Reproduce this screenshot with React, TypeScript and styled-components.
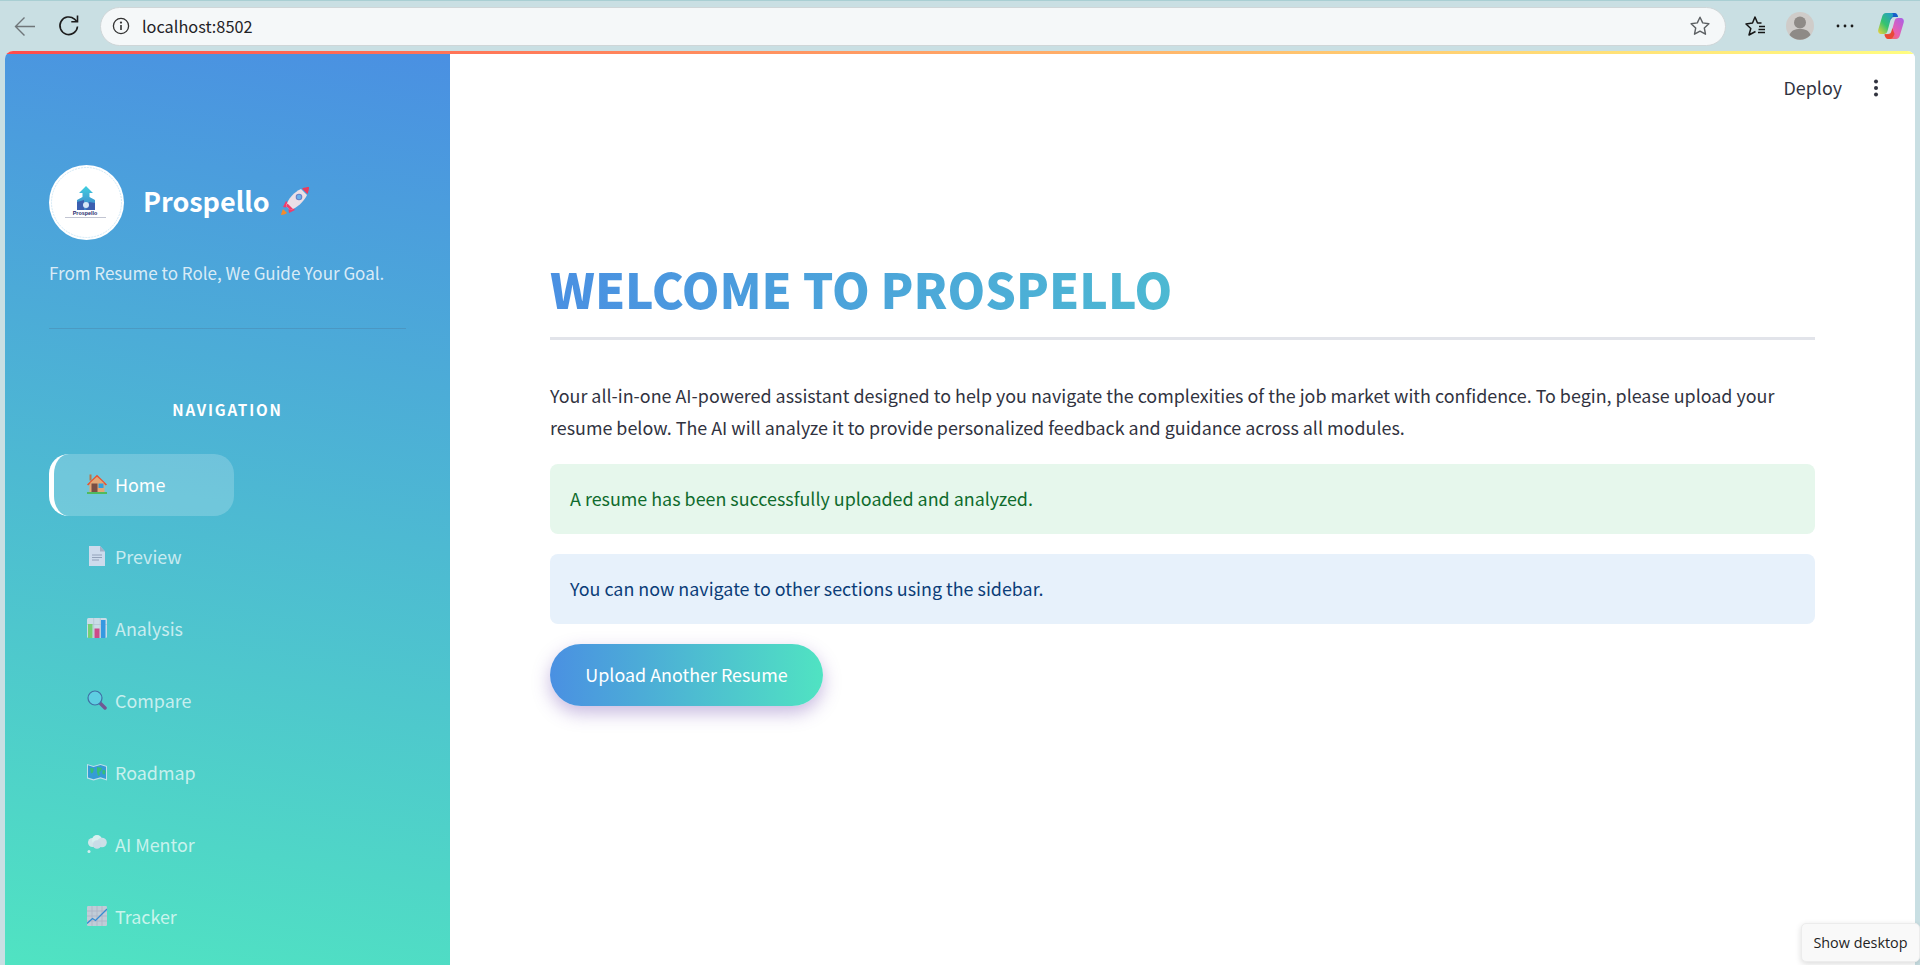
import React from 'react';
import styled, { createGlobalStyle } from 'styled-components';

const GlobalStyle = createGlobalStyle`
  html, body {
    margin: 0;
    padding: 0;
    height: 100%;
    overflow: hidden;
  }
  body {
    font-family: "Noto Sans CJK SC", "Noto Sans", sans-serif;
    background: #c9dfe3;
  }
  * {
    box-sizing: border-box;
  }
`;

const Page = styled.div`
  position: relative;
  width: 1920px;
  height: 965px;
  display: flex;
  flex-direction: column;
  overflow: hidden;
  background: #c9dfe3;
`;

const BrowserBar = styled.header`
  flex: 0 0 51px;
  height: 51px;
  display: flex;
  align-items: center;
  padding: 0 5px 0 6px;
  border-top: 1px solid #a9cfd3;
`;

const ToolButton = styled.button<{ $width: number }>`
  flex: 0 0 ${(p) => p.$width}px;
  width: ${(p) => p.$width}px;
  height: 38px;
  padding: 0;
  border: 0;
  background: none;
  display: flex;
  align-items: center;
  justify-content: center;
`;

const AddressBar = styled.div`
  flex: 1;
  height: 39px;
  margin: 0 7px 0 6px;
  padding: 0 14px 0 11px;
  display: flex;
  align-items: center;
  gap: 12px;
  background: #f5f8f9;
  border: 1px solid #cfd6d8;
  border-radius: 20px;
`;

const Url = styled.span`
  flex: 1;
  font-family: "Noto Sans CJK SC", sans-serif;
  font-size: 16.3px;
  line-height: 22px;
  color: #1f2326;
`;

const AppWindow = styled.div`
  flex: 1;
  margin: 0 5px;
  display: flex;
  flex-direction: column;
  min-height: 0;
  border-radius: 8px 8px 0 0;
  overflow: hidden;
  background: #fff;
`;

const RainbowStripe = styled.div`
  flex: 0 0 3px;
  background: linear-gradient(90deg, #ff4b4b, #fffd80);
`;

const AppBody = styled.div`
  flex: 1;
  display: flex;
  min-height: 0;
`;

const Sidebar = styled.aside`
  flex: 0 0 445px;
  padding: 111px 44px 0;
  display: flex;
  flex-direction: column;
  background: linear-gradient(190deg, #4a90e2 0%, #50e3c2 100%);
`;

const Brand = styled.div`
  display: flex;
  align-items: center;
  gap: 19px;
`;

const LogoCircle = styled.div`
  flex: 0 0 75px;
  width: 75px;
  height: 75px;
  border-radius: 50%;
  background: #fff;
  display: flex;
  align-items: center;
  justify-content: center;
`;

const BrandName = styled.h2`
  margin: 0;
  padding-bottom: 4px;
  display: flex;
  align-items: center;
  gap: 9px;
  font-size: 27px;
  font-weight: 700;
  line-height: 40px;
  color: #fff;
`;

const Tagline = styled.p`
  margin: 17px 0 0;
  font-size: 17px;
  line-height: 32px;
  color: rgba(255, 255, 255, 0.8);
`;

const SideRule = styled.hr`
  width: 357px;
  margin: 39px 0 0;
  border: 0;
  border-top: 1px solid rgba(70, 100, 130, 0.25);
`;

const NavHeading = styled.div`
  width: 357px;
  margin-top: 68px;
  text-align: center;
  font-size: 15.2px;
  font-weight: 700;
  line-height: 24px;
  letter-spacing: 1.85px;
  color: #fff;
`;

const NavList = styled.nav`
  margin-top: 32.5px;
  display: flex;
  flex-direction: column;
  gap: 10px;
`;

const NavItem = styled.div<{ $active?: boolean }>`
  width: 185px;
  height: 62px;
  padding-left: ${(p) => (p.$active ? 33 : 38)}px;
  padding-bottom: 1px;
  display: flex;
  align-items: center;
  gap: 8px;
  font-size: 17.9px;
  line-height: 24px;
  border-radius: 20px;
  border-left: ${(p) => (p.$active ? '5px solid #fff' : '0')};
  background: ${(p) => (p.$active ? 'rgba(255, 255, 255, 0.2)' : 'transparent')};
  color: ${(p) => (p.$active ? '#fff' : 'rgba(255, 255, 255, 0.7)')};
  & > svg {
    opacity: ${(p) => (p.$active ? 1 : 0.8)};
  }
`;

const Main = styled.main`
  flex: 1;
  min-width: 0;
  display: flex;
  flex-direction: column;
  background: #fff;
`;

const TopActions = styled.div`
  height: 70px;
  padding: 0 36px 3px 0;
  display: flex;
  align-items: center;
  justify-content: flex-end;
  gap: 31px;
`;

const DeployLabel = styled.span`
  padding-bottom: 2px;
  font-size: 17.9px;
  line-height: 24px;
  color: #31333f;
`;

const Content = styled.section`
  padding: 129px 100px 0;
  display: flex;
  flex-direction: column;
  align-items: stretch;
`;

const Title = styled.h1`
  margin: 0;
  padding-bottom: 14px;
  border-bottom: 3px solid #e2e4ea;
  font-size: 48px;
  font-weight: 900;
  line-height: 70px;
`;

const TitleText = styled.span`
  display: inline-block;
  background: linear-gradient(90deg, #4a90e2, #50e3c2);
  background-size: 1265px 100%;
  -webkit-background-clip: text;
  background-clip: text;
  color: transparent;
`;

const Intro = styled.p`
  margin: 39px 0 0;
  font-size: 17.9px;
  line-height: 32px;
  color: #31333f;
`;

const Notice = styled.div<{ $kind: 'success' | 'info' }>`
  height: 70px;
  margin-top: ${(p) => (p.$kind === 'success' ? 21 : 20)}px;
  padding: 0 20px 2px;
  display: flex;
  align-items: center;
  border-radius: 8px;
  font-size: 17.9px;
  line-height: 24px;
  background: ${(p) => (p.$kind === 'success' ? '#e6f7ec' : '#e7f1fb')};
  color: ${(p) => (p.$kind === 'success' ? '#0f6b2c' : '#0b3d78')};
`;

const UploadButton = styled.button`
  align-self: flex-start;
  width: 273px;
  height: 62px;
  margin-top: 20px;
  padding: 0 0 2px;
  border: 0;
  border-radius: 31px;
  font-family: inherit;
  font-size: 17.9px;
  font-weight: 400;
  color: #fff;
  background: linear-gradient(90deg, #4a90e2, #50e3c2);
  box-shadow: 0 7px 18px rgba(100, 60, 170, 0.36);
`;

const DesktopTip = styled.div`
  position: absolute;
  right: 0;
  bottom: 3px;
  width: 119px;
  height: 39px;
  display: flex;
  align-items: center;
  justify-content: center;
  font-family: "Open Sans", sans-serif;
  font-size: 14.4px;
  color: #1f1f1f;
  background: #f9f9f9;
  border: 1px solid #ececec;
  border-radius: 5px;
  box-shadow: 0 2px 6px rgba(0, 0, 0, 0.14);
`;

const BackIcon = () => (
  <svg width="24" height="24" viewBox="0 0 24 24" fill="none" stroke="#6f7679" strokeWidth="1.4">
    <path d="M22 12.5H3M11.5 3.5 2.5 12.5l9 9" />
  </svg>
);

const ReloadIcon = () => (
  <svg width="24" height="24" viewBox="0 0 24 24" fill="none" stroke="#1c1c1c" strokeWidth="1.6">
    <path d="M20.5 12.5a8.8 8.8 0 1 1-3-7.4L20 7.5" />
    <path d="M20.5 1.5v6.2h-6.2" />
  </svg>
);

const InfoIcon = () => (
  <svg width="18" height="18" viewBox="0 0 18 18" fill="none" stroke="#333" strokeWidth="1.3">
    <circle cx="9" cy="9" r="7.6" />
    <path d="M9 8v5" strokeWidth="1.6" />
    <circle cx="9" cy="5.6" r="0.5" fill="#333" />
  </svg>
);

const StarIcon = () => (
  <svg width="22" height="22" viewBox="0 0 22 22" fill="none" stroke="#5c6063" strokeWidth="1.4" strokeLinejoin="round">
    <path d="M11 2.2l2.7 5.7 6.2.8-4.6 4.3 1.2 6.2L11 16.1l-5.500 3.1 1.200-6.200-4.600-4.300 6.200-.8z" />
  </svg>
);

const FavoritesIcon = () => (
  <svg width="24" height="24" viewBox="0 0 24 24" fill="none" stroke="#161616" strokeWidth="1.5" strokeLinejoin="round">
    <path d="M18.500 9H14.500L12 3 9.500 9 3 10l4.800 4.500L6 21l6.500-3.500" />
    <path d="M16 12.500h6M15.500 15.500h6.500M15 18.500h7" strokeWidth="1.3" />
  </svg>
);

const AvatarIcon = () => (
  <svg width="28" height="28" viewBox="0 0 28 28">
    <circle cx="14" cy="14" r="14" fill="#cfccc9" />
    <circle cx="14" cy="10.500" r="6" fill="#8e8a86" />
    <path d="M3.500 23c1.500-4.500 5.500-6 10.500-6s9 1.500 10.500 6a14 14 0 0 1-21 0z" fill="#8e8a86" />
  </svg>
);

const MoreIcon = () => (
  <svg width="18" height="6" viewBox="0 0 18 6" fill="#1a1a1a">
    <circle cx="2" cy="3" r="1.4" />
    <circle cx="9" cy="3" r="1.4" />
    <circle cx="16" cy="3" r="1.4" />
  </svg>
);

const CopilotIcon = () => (
  <svg width="28" height="28" viewBox="0 0 28 28">
    <defs>
      <linearGradient id="cpA" x1="0" y1="1" x2="1" y2="0">
        <stop offset="0" stopColor="#f5d23a" />
        <stop offset="0.4" stopColor="#35c46e" />
        <stop offset="1" stopColor="#1f8fe8" />
      </linearGradient>
      <linearGradient id="cpB" x1="0" y1="1" x2="1" y2="0">
        <stop offset="0" stopColor="#f2763c" />
        <stop offset="0.45" stopColor="#e95fb0" />
        <stop offset="1" stopColor="#a860e8" />
      </linearGradient>
    </defs>
    <path d="M9 1h8.500c1.600 0 2.600.7 3 2L21 5h-4c-2 0-3 1-3.500 3L10.500 19c-.5 1.800-1.500 3-3.500 3H4.500C2 22 .6 20 1.300 17.500L5 5c.7-2.600 2-4 4-4z" fill="url(#cpA)" />
    <path d="M11 27h8c2 0 3.300-1.400 4-4l3.700-12.500c.7-2.500-.7-4.500-3.200-4.500H21c-2 0-3 1.200-3.500 3l-3 11c-.5 2-1.500 3-3.500 3H7.500c.4 1.300 1.500 4 3.500 4z" fill="url(#cpB)" />
    <path d="M13 8c.6-2 1.500-3 3.500-3H21c-.3-1.500-1-3-3-4h-3c2 1 1 3 0 5z" fill="#1552c8" opacity="0.85" />
    <path d="M7.500 22H11c2 0 3-1 3.500-3l.8-3 2.200 6c-1 3-2.500 5-5 5h-1.500c-2 0-3.100-2.700-3.500-5z" fill="#e8452f" opacity="0.9" />
  </svg>
);

const KebabIcon = () => (
  <svg width="6" height="18" viewBox="0 0 6 18" fill="#31333f">
    <circle cx="3" cy="2.500" r="2" />
    <circle cx="3" cy="9" r="2" />
    <circle cx="3" cy="15.500" r="2" />
  </svg>
);

const ProspelloLogo = () => (
  <svg width="75" height="75" viewBox="0 0 75 75">
    <circle cx="37.500" cy="37.500" r="35" fill="none" stroke="#c6e2f2" strokeWidth="0.8" strokeDasharray="2 1" />
    <defs>
      <linearGradient id="lgA" x1="0" y1="0" x2="0" y2="1">
        <stop offset="0" stopColor="#3fd0e0" />
        <stop offset="1" stopColor="#3f7fc8" />
      </linearGradient>
    </defs>
    <path d="M37 21l7 7h-3.500v4l5.500 3v10H28V35l5.500-3v-4H30z" fill="url(#lgA)" />
    <path d="M28 37l7-2v10h-7zM40 37l6 1v7h-9z" fill="#3b5fb0" />
    <circle cx="37" cy="40" r="3" fill="#d6e6f6" />
    <text x="36" y="50" textAnchor="middle" fontFamily="Liberation Sans, sans-serif" fontSize="5.400" fontWeight="700" fill="#262c6e">Prospello</text>
    <rect x="16" y="52" width="41" height="1" fill="#c2c5d2" />
  </svg>
);

const RocketEmoji = () => (
  <svg width="32" height="32" viewBox="0 0 32 32">
    <path d="M4 24c-1 2-1.500 4-2 6 2.500 0 4.500-1 6-2z" fill="#f58a2b" />
    <path d="M7 16l-3 6 3 .5 3-4z" fill="#ef3d6c" />
    <path d="M16 25l-6 3-.5-3.500 4-2.500z" fill="#ef3d6c" />
    <path d="M7 21C9 14 15 7 22 4l6 6c-3 6.500-10 13-16.500 15z" fill="#ecdfe6" />
    <path d="M7 21l4.500 4 2.500-1-5.500-5.500z" fill="#ef3d6c" />
    <path d="M23 3.500c2.500-1 5-1.500 7-1.500 0 2-.5 4.500-1.500 7z" fill="#ec3a5c" />
    <circle cx="20" cy="12" r="3.300" fill="#6b82c8" />
    <circle cx="20" cy="12" r="2.200" fill="#6cb2ec" />
  </svg>
);

const HouseEmoji = () => (
  <svg width="20" height="20" viewBox="0 0 20 20">
    <rect x="2.500" y="0.500" width="2" height="6" fill="#b5794a" />
    <rect x="2.500" y="8" width="15" height="11" fill="#e3a876" />
    <path d="M0 10.500 10 0.800l10 9.700-1.200 1L10 3.500 1.200 11.500z" fill="#e9532f" />
    <path d="M10 2.800 2.500 9.500h15z" fill="#e3a876" />
    <rect x="4.500" y="9.500" width="6" height="9" fill="#7a4f45" />
    <rect x="11.500" y="9.500" width="5" height="4.500" fill="#2fa0e0" />
    <rect x="0" y="18" width="20" height="2" fill="#4fbb5e" />
  </svg>
);

const PageEmoji = () => (
  <svg width="20" height="20" viewBox="0 0 20 20">
    <path d="M2 0h11l5 5.500V20H2z" fill="#ede2f4" />
    <path d="M13 0l5 5.500h-5z" fill="#b9adc6" />
    <path d="M5 9h10M5 11.500h10M5 14h7" stroke="#9d93ad" strokeWidth="0.9" />
  </svg>
);

const BarsEmoji = () => (
  <svg width="20" height="20" viewBox="0 0 20 20">
    <rect width="20" height="20" rx="1.500" fill="#e8e2ee" />
    <path d="M0 6.500h20M6.700 0v20M13.300 0v20" stroke="#c4bccf" strokeWidth="0.6" />
    <rect x="1" y="6" width="4.500" height="14" fill="#7fd35f" />
    <rect x="7.500" y="10.500" width="5" height="9.500" fill="#ec2d78" />
    <rect x="14" y="2" width="4.500" height="18" fill="#2f8ee6" />
  </svg>
);

const SearchEmoji = () => (
  <svg width="20" height="20" viewBox="0 0 20 20">
    <path d="M12.500 12.500l5.500 5.500" stroke="#7a3b86" strokeWidth="3.500" strokeLinecap="round" />
    <circle cx="8" cy="8" r="7" fill="#62cfe8" stroke="#3d5a9c" strokeWidth="1.200" />
  </svg>
);

const MapEmoji = () => (
  <svg width="20" height="20" viewBox="0 0 20 20">
    <path d="M0 2l6.500 2L13.500 2 20 4v14.500l-6.500-2-7 2L0 16.500z" fill="#dce4f2" />
    <path d="M1 3.200l5.500 1.800 7-2L19 4.800V17l-5.500-1.700-7 2L1 15.600z" fill="#2f8fd8" />
    <path d="M3 6l4 .5-1 4-2 1zM10 5l5 1-1 3-2 1 1 3-2 1-1-4zM15.500 8l3 .5-.5 4-2.500-.5z" fill="#2fbb62" />
  </svg>
);

const ThoughtEmoji = () => (
  <svg width="20" height="20" viewBox="0 0 20 20">
    <circle cx="5.500" cy="8.500" r="4.500" fill="#f2eaf4" />
    <circle cx="10" cy="6" r="5" fill="#fbf8fb" />
    <circle cx="15" cy="8.500" r="4.800" fill="#ece2f0" />
    <circle cx="10" cy="10.500" r="4.300" fill="#e9def0" />
    <circle cx="2" cy="17.500" r="1.500" fill="#f6f1f8" />
  </svg>
);

const TrendEmoji = () => (
  <svg width="20" height="20" viewBox="0 0 20 20">
    <rect width="20" height="20" rx="1.200" fill="#ddc8dc" />
    <path d="M0 5h20M0 10h20M0 15h20M5 0v20M10 0v20M15 0v20" stroke="#bca3c0" strokeWidth="0.6" />
    <path d="M0 17.500l5.500-5 3 2L20 3" fill="none" stroke="#2f78d8" strokeWidth="1.300" />
  </svg>
);

const navItems = [
  { label: 'Home', icon: <HouseEmoji />, active: true },
  { label: 'Preview', icon: <PageEmoji /> },
  { label: 'Analysis', icon: <BarsEmoji /> },
  { label: 'Compare', icon: <SearchEmoji /> },
  { label: 'Roadmap', icon: <MapEmoji /> },
  { label: 'AI Mentor', icon: <ThoughtEmoji /> },
  { label: 'Tracker', icon: <TrendEmoji /> },
];

const App = () => {
  return (
    <>
      <GlobalStyle />
      <Page>
        <BrowserBar>
          <ToolButton $width={38}><BackIcon /></ToolButton>
          <ToolButton $width={50}><ReloadIcon /></ToolButton>
          <AddressBar>
            <InfoIcon />
            <Url>localhost:8502</Url>
            <StarIcon />
          </AddressBar>
          <ToolButton $width={44}><FavoritesIcon /></ToolButton>
          <ToolButton $width={46}><AvatarIcon /></ToolButton>
          <ToolButton $width={44}><MoreIcon /></ToolButton>
          <ToolButton $width={48}><CopilotIcon /></ToolButton>
        </BrowserBar>
        <AppWindow>
          <RainbowStripe />
          <AppBody>
            <Sidebar>
              <Brand>
                <LogoCircle><ProspelloLogo /></LogoCircle>
                <BrandName>Prospello <RocketEmoji /></BrandName>
              </Brand>
              <Tagline>From Resume to Role, We Guide Your Goal.</Tagline>
              <SideRule />
              <NavHeading>NAVIGATION</NavHeading>
              <NavList>
                {navItems.map((item) => (
                  <NavItem key={item.label} $active={item.active}>
                    {item.icon}
                    <span>{item.label}</span>
                  </NavItem>
                ))}
              </NavList>
            </Sidebar>
            <Main>
              <TopActions>
                <DeployLabel>Deploy</DeployLabel>
                <KebabIcon />
              </TopActions>
              <Content>
                <Title><TitleText>WELCOME TO PROSPELLO</TitleText></Title>
                <Intro>
                  Your all-in-one AI-powered assistant designed to help you navigate the complexities of the job market with confidence. To begin, please upload your resume below. The AI will analyze it to provide personalized feedback and guidance across all modules.
                </Intro>
                <Notice $kind="success">A resume has been successfully uploaded and analyzed.</Notice>
                <Notice $kind="info">You can now navigate to other sections using the sidebar.</Notice>
                <UploadButton>Upload Another Resume</UploadButton>
              </Content>
            </Main>
          </AppBody>
        </AppWindow>
        <DesktopTip>Show desktop</DesktopTip>
      </Page>
    </>
  );
};

export default App;
